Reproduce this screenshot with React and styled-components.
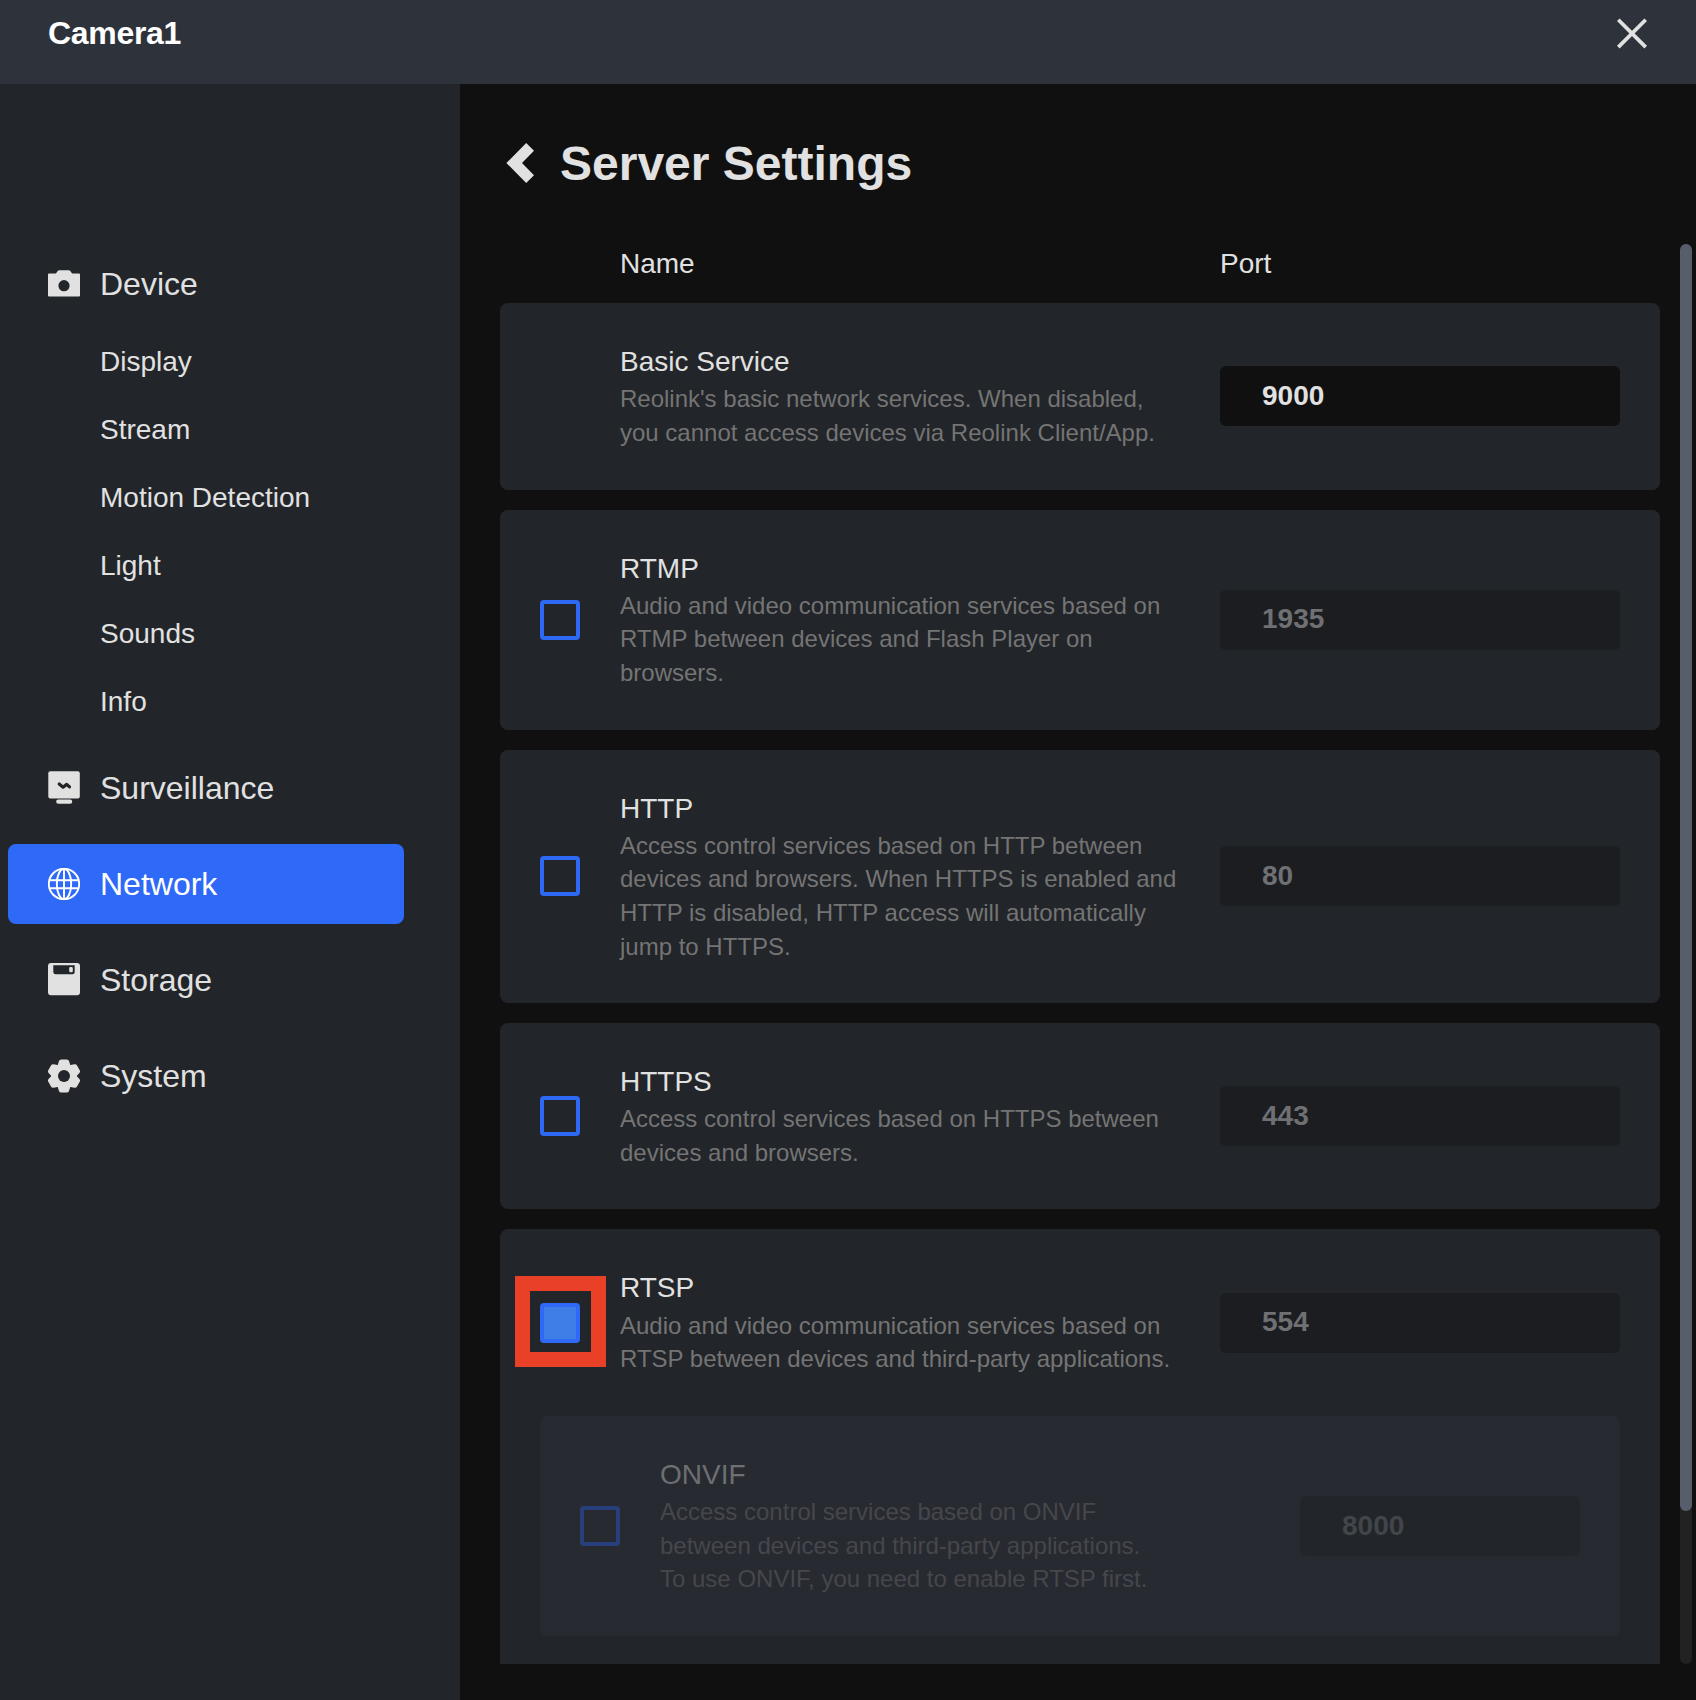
import React from "react";
import styled, { createGlobalStyle } from "styled-components";

const GlobalStyle = createGlobalStyle`
  * { box-sizing: border-box; }
  body {
    margin: 0;
    background: #101010;
    color: #e1e1e1;
    font-family: Arial, "Liberation Sans", sans-serif;
    font-size: 28px;
    line-height: 1.4;
  }
`;

const Window = styled.div`
  height: 1700px;
  display: flex;
  flex-direction: column;
  overflow: hidden;
`;

const Header = styled.header`
  flex: none;
  height: 84px;
  padding: 0 48px 18px;
  display: flex;
  align-items: center;
  justify-content: space-between;
  background: #2e323b;
`;

const DeviceName = styled.h1`
  margin: 0;
  font-size: 32px;
  font-weight: 700;
  letter-spacing: -0.3px;
  color: #fff;
`;

const IconButton = styled.button`
  display: flex;
  padding: 0;
  border: 0;
  background: none;
  color: #e1e1e1;
`;

const Body = styled.div`
  flex: 1;
  display: flex;
  min-height: 0;
`;

const Sidebar = styled.nav`
  flex: none;
  width: 460px;
  padding: 160px 56px 0 8px;
  background: #222529;
`;

const NavItem = styled.a`
  display: flex;
  align-items: center;
  gap: 20px;
  height: 80px;
  margin-bottom: ${(p) => (p.$open ? 0 : 16)}px;
  padding-left: 40px;
  border-radius: 8px;
  font-size: 32px;
  color: ${(p) => (p.$active ? "#fff" : "#e1e1e1")};
  background: ${(p) => (p.$active ? "#2f69f8" : "transparent")};
`;

const SubList = styled.div`
  padding: 3.4px 0 12.6px 92px;
`;

const SubItem = styled.a`
  display: flex;
  align-items: center;
  height: 68px;
`;

const Main = styled.main`
  flex: 1;
  display: flex;
  flex-direction: column;
  padding: 0 4px 36px 40px;
`;

const TitleBar = styled.div`
  flex: none;
  height: 160px;
  display: flex;
  align-items: center;
  gap: 26px;
  padding-left: 6px;
`;

const Title = styled.h2`
  margin: 0;
  font-size: 48px;
  font-weight: 700;
  line-height: 60px;
`;

const ScrollArea = styled.div`
  flex: 1;
  min-height: 0;
  display: flex;
  justify-content: space-between;
`;

const Content = styled.div`
  width: 1160px;
  overflow: hidden;
`;

const ScrollTrack = styled.div`
  width: 12px;
  border-radius: 6px;
  background: #222;
`;

const ScrollThumb = styled.div`
  height: 1267px;
  border-radius: 6px;
  background: #575d6b;
`;

const ColumnHeads = styled.div`
  display: grid;
  grid-template-columns: 600px 1fr;
  padding: 0 0 20px 120px;
`;

const Card = styled.section`
  margin-bottom: 20px;
  border-radius: 8px;
  background: #222529;
`;

const Row = styled.div`
  display: grid;
  grid-template-columns: 80px 1fr ${(p) => (p.$nested ? 280 : 400)}px;
  align-items: center;
  padding: 40px;
`;

const NestedCard = styled.div`
  margin: 0 40px;
  border-radius: 8px;
  background: #282a32;
`;

const CardTail = styled.div`
  height: 40px;
`;

const Checkbox = styled.div`
  position: relative;
  grid-column: 1;
  width: 40px;
  height: 40px;
  border: 4px solid ${(p) => (p.$dim ? "#27407c" : "#2f69f8")};
  border-radius: 4px;
  background: ${(p) => (p.$checked ? "#407ee7" : "transparent")};
`;

const Highlight = styled.span`
  position: absolute;
  top: -31px;
  left: -29px;
  width: 91px;
  height: 91px;
  border: 15px solid #e94127;
`;

const Info = styled.div`
  grid-column: 2;
`;

const Name = styled.div`
  padding-bottom: 1.2px;
  line-height: 38px;
  color: ${(p) => (p.$dim ? "#6d6f73" : "#e1e1e1")};
`;

const Line = styled.div`
  font-size: 24px;
  line-height: 33.6px;
  white-space: nowrap;
  color: ${(p) => (p.$dim ? "#45474b" : "#747474")};
`;

const portLook = {
  active: { bg: "#101010", fg: "#e1e1e1" },
  disabled: { bg: "#1c1d20", fg: "#6f7073" },
  nested: { bg: "#222529", fg: "#424549" },
};

const Port = styled.div`
  grid-column: 3;
  display: flex;
  align-items: center;
  height: 60px;
  padding: 0 0 1.2px 42px;
  border-radius: 6px;
  font-weight: 700;
  background: ${(p) => portLook[p.$look].bg};
  color: ${(p) => portLook[p.$look].fg};
`;

const CameraIcon = () => (
  <svg width="32" height="32" viewBox="0 0 32 32" fill="currentColor">
    <path
      fillRule="evenodd"
      d="M11.200 2.200h9.600q.8 0 1.300.6l2 2.600H31a1 1 0 0 1 1 1v21.200a1 1 0 0 1-1 1H1a1 1 0 0 1-1-1V6.400a1 1 0 0 1 1-1h6.900l2-2.600q.5-.6 1.300-.6zM16 12.100a5.600 5.600 0 1 0 0 11.200 5.600 5.600 0 0 0 0-11.200z"
    />
  </svg>
);

const MonitorIcon = () => (
  <svg width="32" height="34" viewBox="0 0 32 34" fill="currentColor">
    <rect x="0.300" y="0.300" width="31.500" height="27.200" rx="2" />
    <rect x="8.200" y="28.500" width="16" height="4.200" rx="2" />
    <path
      d="M11.200 13 15.100 16.200 18.700 13.300 21.500 15.900"
      fill="none"
      stroke="#222529"
      strokeWidth="3.200"
      strokeLinecap="round"
      strokeLinejoin="round"
    />
  </svg>
);

const GlobeIcon = () => (
  <svg width="32" height="32" viewBox="0 0 32 32" fill="none" stroke="currentColor" strokeWidth="1.900">
    <circle cx="16" cy="16" r="15.200" />
    <ellipse cx="16" cy="16" rx="7.200" ry="15.200" />
    <path d="M16 .8v30.400M1.800 12.200h28.400M1.800 20.300h28.400" />
  </svg>
);

const DiskIcon = () => (
  <svg width="32" height="33" viewBox="0 0 32 33" fill="currentColor">
    <path
      fillRule="evenodd"
      d="M3 0h26a3 3 0 0 1 3 3v26.200a3 3 0 0 1-3 3H3a3 3 0 0 1-3-3V3a3 3 0 0 1 3-3zM5.300 2.200V9a2.300 2.300 0 0 0 2.300 2.300h16.800A2.300 2.300 0 0 0 26.700 9V2.200z"
    />
    <rect x="21.200" y="3.900" width="3.600" height="5.300" rx="1.200" />
  </svg>
);

const GearIcon = () => (
  <svg width="32" height="34" viewBox="0 0 32 34" fill="currentColor">
    <circle cx="16" cy="17" r="12.300" />
    {[0, 60, 120].map((angle) => (
      <path
        key={angle}
        transform={`rotate(${angle} 16 17)`}
        d="M13.200.5h5.600q1.600 0 2.200 1.600L22.600 7v20L21 31.900q-.6 1.600-2.200 1.600h-5.600q-1.600 0-2.200-1.600L9.400 27V7L11 2.100q.6-1.600 2.200-1.600z"
      />
    ))}
    <circle cx="16" cy="17" r="6" fill="#222529" />
  </svg>
);

const CloseIcon = () => (
  <svg width="32" height="32" viewBox="0 0 32 32" fill="none" stroke="currentColor" strokeWidth="3.700">
    <path d="M2.300 2.700l27.400 27.400M29.700 2.700L2.300 30.100" />
  </svg>
);

const BackIcon = () => (
  <svg width="28" height="42" viewBox="0 0 28 42" fill="currentColor">
    <path d="M20.200 0 28 7.800 16 20l12 12.200L20.200 40 .4 20z" />
  </svg>
);

const deviceMenu = ["Display", "Stream", "Motion Detection", "Light", "Sounds", "Info"];

const sections = [
  { label: "Surveillance", Icon: MonitorIcon },
  { label: "Network", Icon: GlobeIcon, active: true },
  { label: "Storage", Icon: DiskIcon },
  { label: "System", Icon: GearIcon },
];

const services = [
  {
    name: "Basic Service",
    port: "9000",
    look: "active",
    lines: [
      "Reolink's basic network services. When disabled,",
      "you cannot access devices via Reolink Client/App.",
    ],
  },
  {
    name: "RTMP",
    port: "1935",
    toggle: true,
    lines: [
      "Audio and video communication services based on",
      "RTMP between devices and Flash Player on",
      "browsers.",
    ],
  },
  {
    name: "HTTP",
    port: "80",
    toggle: true,
    lines: [
      "Access control services based on HTTP between",
      "devices and browsers. When HTTPS is enabled and",
      "HTTP is disabled, HTTP access will automatically",
      "jump to HTTPS.",
    ],
  },
  {
    name: "HTTPS",
    port: "443",
    toggle: true,
    lines: ["Access control services based on HTTPS between", "devices and browsers."],
  },
  {
    name: "RTSP",
    port: "554",
    toggle: true,
    checked: true,
    lines: [
      "Audio and video communication services based on",
      "RTSP between devices and third-party applications.",
    ],
    child: {
      name: "ONVIF",
      port: "8000",
      look: "nested",
      toggle: true,
      lines: [
        "Access control services based on ONVIF",
        "between devices and third-party applications.",
        "To use ONVIF, you need to enable RTSP first.",
      ],
    },
  },
];

function ServiceRow({ service, nested }) {
  return (
    <Row $nested={nested}>
      {service.toggle && (
        <Checkbox $dim={nested} $checked={service.checked}>
          {service.checked && <Highlight />}
        </Checkbox>
      )}
      <Info>
        <Name $dim={nested}>{service.name}</Name>
        {service.lines.map((line) => (
          <Line key={line} $dim={nested}>
            {line}
          </Line>
        ))}
      </Info>
      <Port $look={service.look || "disabled"}>{service.port}</Port>
    </Row>
  );
}

export default function App() {
  return (
    <Window>
      <GlobalStyle />
      <Header>
        <DeviceName>Camera1</DeviceName>
        <IconButton aria-label="Close">
          <CloseIcon />
        </IconButton>
      </Header>
      <Body>
        <Sidebar>
          <NavItem $open>
            <CameraIcon />
            Device
          </NavItem>
          <SubList>
            {deviceMenu.map((label) => (
              <SubItem key={label}>{label}</SubItem>
            ))}
          </SubList>
          {sections.map(({ label, Icon, active }) => (
            <NavItem key={label} $active={active}>
              <Icon />
              {label}
            </NavItem>
          ))}
        </Sidebar>
        <Main>
          <TitleBar>
            <IconButton aria-label="Back">
              <BackIcon />
            </IconButton>
            <Title>Server Settings</Title>
          </TitleBar>
          <ScrollArea>
            <Content>
              <ColumnHeads>
                <span>Name</span>
                <span>Port</span>
              </ColumnHeads>
              {services.map((service) => (
                <Card key={service.name}>
                  <ServiceRow service={service} />
                  {service.child && (
                    <>
                      <NestedCard>
                        <ServiceRow service={service.child} nested />
                      </NestedCard>
                      <CardTail />
                    </>
                  )}
                </Card>
              ))}
            </Content>
            <ScrollTrack>
              <ScrollThumb />
            </ScrollTrack>
          </ScrollArea>
        </Main>
      </Body>
    </Window>
  );
}
